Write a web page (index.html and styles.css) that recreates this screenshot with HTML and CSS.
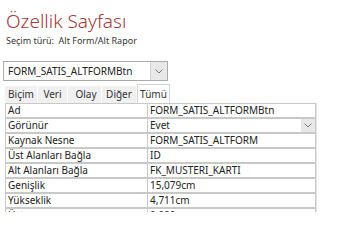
FILE: index.html
```html
<!DOCTYPE html>
<html>
<head>
    <title>Özellik Sayfası</title>
    <meta charset="utf-8">
    <link rel="stylesheet" href="styles.css">
</head>
<body>
<div class="header">
    <div class="title">Özellik Sayfası</div>
    <div class="subtitle">Seçim türü:&nbsp; Alt Form/Alt Rapor</div>
</div>
<div class="combo">
    <div class="combo-text">FORM_SATIS_ALTFORMBtn</div>
    <div class="combo-btn">
        <svg width="8" height="5" viewBox="0 0 8 5"><path d="M0.5 0.5 L4 4 L7.5 0.5" fill="none" stroke="#777" stroke-width="1"/></svg>
    </div>
</div>
<div class="tabs">
    <div class="tab">Biçim</div>
    <div class="tab">Veri</div>
    <div class="tab">Olay</div>
    <div class="tab">Diğer</div>
    <div class="tab active">Tümü</div>
</div>
<div class="panel">
    <table class="props">
        <tr><td class="name">Ad</td><td class="value">FORM_SATIS_ALTFORMBtn</td></tr>
        <tr><td class="name">Görünür</td><td class="value"><div class="pick"><span>Evet</span><span class="pick-btn"><svg width="8" height="5" viewBox="0 0 8 5"><path d="M0.5 0.5 L4 4 L7.5 0.5" fill="none" stroke="#777" stroke-width="1"/></svg></span></div></td></tr>
        <tr><td class="name">Kaynak Nesne</td><td class="value">FORM_SATIS_ALTFORM</td></tr>
        <tr><td class="name">Üst Alanları Bağla</td><td class="value">ID</td></tr>
        <tr><td class="name">Alt Alanları Bağla</td><td class="value">FK_MUSTERI_KARTI</td></tr>
        <tr><td class="name">Genişlik</td><td class="value">15,079cm</td></tr>
        <tr><td class="name">Yükseklik</td><td class="value">4,711cm</td></tr>
        <tr><td class="name">Üst</td><td class="value">0,000cm</td></tr>
    </table>
</div>
</body>
</html>
```

FILE: styles.css
```css
body {
    margin: 0;
    background: #fff;
    font-family: "Noto Sans", "Open Sans", sans-serif;
    color: #222;
    width: 338px;
    height: 234px;
    overflow: hidden;
}

.header {
    padding: 7px 0 0 6px;
}

.title {
    font-size: 19px;
    font-weight: 300;
    color: #a4373a;
    line-height: 28px;
}

.subtitle {
    font-size: 9px;
    line-height: 12px;
    color: #333;
}

.combo {
    display: flex;
    margin: 14px 0 0 3px;
    width: 163px;
    height: 18px;
    border: 1px solid #ababab;
}

.combo-text {
    flex: 1;
    font-size: 10px;
    line-height: 18px;
    padding-left: 4px;
}

.combo-btn {
    width: 16px;
    background: #e8e8e8;
    border-left: 1px solid #d4d4d4;
    display: flex;
    align-items: center;
    justify-content: center;
}

.tabs {
    display: flex;
    margin: 4px 0 0 5px;
    height: 18px;
    align-items: flex-end;
}

.tab {
    box-sizing: border-box;
    font-size: 10px;
    line-height: 17px;
    text-align: center;
    background: #f0f0f0;
    border-right: 1px solid #fff;
    color: #333;
}

.tab:nth-child(1) { width: 33px; }
.tab:nth-child(2) { width: 30px; }
.tab:nth-child(3) { width: 34px; padding-left: 3px; }
.tab:nth-child(4) { width: 35px; }

.tab.active {
    width: 33px;
    background: #fff;
    border: 1px solid #d4d4d4;
    border-bottom: none;
    line-height: 18px;
}

.panel {
    margin-left: 5px;
    width: 311px;
    height: 109px;
    overflow: hidden;
    border-right: 1px solid #e4e4e4;
}

.props {
    border-collapse: collapse;
    width: 311px;
    font-size: 10px;
}

.props td {
    height: 13px;
    padding: 0 2px;
    border: 1px solid #c8c8c8;
    border-bottom-width: 2px;
    line-height: 13px;
    white-space: nowrap;
}

.props .name {
    width: 137px;
}

.pick {
    display: flex;
    justify-content: space-between;
    align-items: center;
}

.pick-btn {
    width: 14px;
    height: 13px;
    background: #e8e8e8;
    display: flex;
    align-items: center;
    justify-content: center;
    margin-right: -2px;
}
```
